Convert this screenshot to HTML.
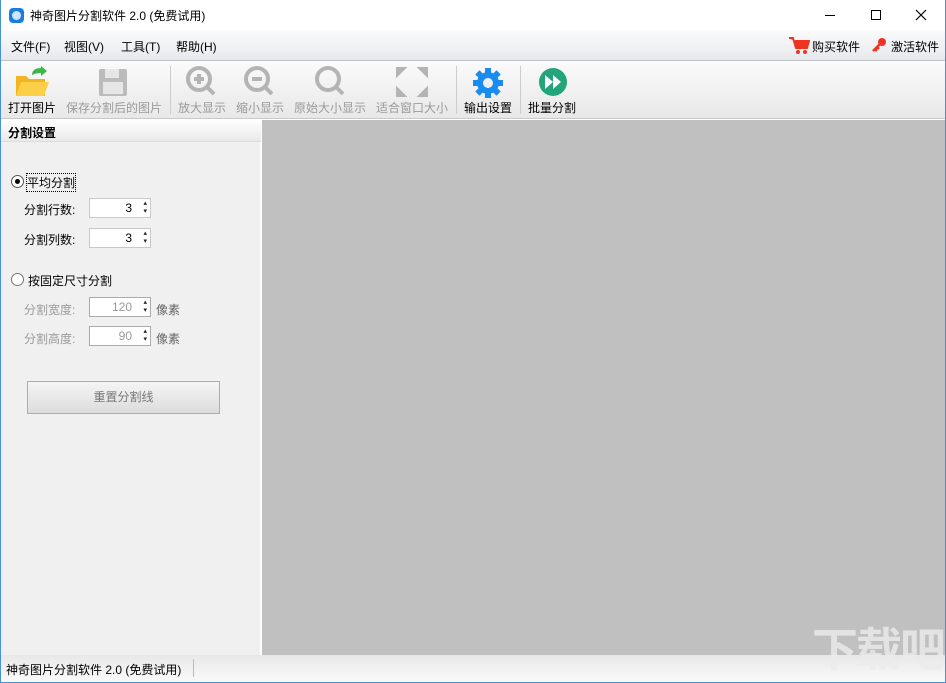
<!DOCTYPE html><html><head><meta charset="utf-8"><style>
*{margin:0;padding:0;box-sizing:border-box}
body{width:946px;height:683px;position:relative;overflow:hidden;background:#fff;font-family:"Liberation Sans","Noto Sans CJK SC",sans-serif;font-size:12px;color:#000}
.a{position:absolute}
.tb{font-size:12px;text-align:center}
.dis{color:#9a9a9a}
.sep{position:absolute;top:66px;width:1px;height:48px;background:#ccc}
.spin{position:absolute;width:62px;height:20px;background:#fff;border:1px solid #c8c8c8;text-align:right;padding-right:18px;line-height:18px}
.spin:after{content:"▴\A▾";white-space:pre;position:absolute;right:3px;top:1px;font-size:7px;line-height:8px;color:#222}
</style></head><body>
<div class="a" style="left:0;top:0;width:946px;height:683px;border:1px solid #4a90d9;border-top:none"></div>
<div class="a" style="left:9px;top:8px;width:15px;height:15px;border-radius:4px;background:#1a7de0"><div class="a" style="left:3px;top:3px;width:9px;height:9px;border-radius:50%;background:#cde6ff"></div></div>
<div class="a" style="left:30px;top:7px;font-size:12px">神奇图片分割软件 2.0 (免费试用)</div>
<div class="a" style="left:825px;top:15px;width:10px;height:1px;background:#000"></div>
<div class="a" style="left:871px;top:10px;width:10px;height:10px;border:1px solid #000"></div>
<svg class="a" style="left:915px;top:9px" width="12" height="12"><path d="M1 1l10 10M11 1L1 11" stroke="#000" stroke-width="1.2"/></svg>
<div class="a" style="left:1px;top:30px;width:944px;height:31px;background:linear-gradient(#fbfbfb,#e6e9ec);border-bottom:1px solid #bfc3c7"></div>
<div class="a" style="left:11px;top:38px">文件(F)</div>
<div class="a" style="left:64px;top:38px">视图(V)</div>
<div class="a" style="left:121px;top:38px">工具(T)</div>
<div class="a" style="left:176px;top:38px">帮助(H)</div>
<svg class="a" style="left:788px;top:36px" width="22" height="20"><path d="M1 2h4l3 10h11l2-7H7" fill="#e32" stroke="#e32" stroke-width="2"/><circle cx="10" cy="16" r="2" fill="#e32"/><circle cx="17" cy="16" r="2" fill="#e32"/></svg>
<div class="a" style="left:812px;top:38px">购买软件</div>
<svg class="a" style="left:871px;top:37px" width="16" height="16"><circle cx="11" cy="5" r="4" fill="#e32"/><path d="M9 7L2 14M4 12l2 2M6 10l2 2" stroke="#e32" stroke-width="2.5"/></svg>
<div class="a" style="left:891px;top:38px">激活软件</div>
<div class="a" style="left:1px;top:62px;width:944px;height:57px;background:linear-gradient(#fafafa,#e8e8e8);border-bottom:1px solid #c8c8c8"></div>
<svg class="a" style="left:14px;top:66px" width="36" height="32"><path d="M2 10h10l3 3h16v17H2z" fill="#f2b420"/><path d="M2 30l5-14h28l-5 14z" fill="#fbd048"/><path d="M18 9c0-5 4-7 9-7V0l6 5-6 5V7c-4 0-7 1-9 2z" fill="#3cb54a"/></svg>
<div class="a tb" style="left:8px;top:99px">打开图片</div>
<svg class="a" style="left:98px;top:68px" width="30" height="28"><rect x="1" y="1" width="28" height="27" rx="2" fill="#bbb"/><rect x="7" y="1" width="14" height="9" fill="#e6e6e6"/><rect x="5" y="14" width="20" height="12" fill="#e6e6e6"/></svg>
<div class="a tb dis" style="left:66px;top:99px">保存分割后的图片</div>
<div class="sep" style="left:170px"></div>
<svg class="a" style="left:185px;top:66px" width="32" height="32"><circle cx="14" cy="13" r="11" fill="none" stroke="#b4b4b4" stroke-width="4"/><path d="M22 21l7 7M9 13h10M14 8v10" stroke="#b4b4b4" stroke-width="4"/></svg>
<div class="a tb dis" style="left:178px;top:99px">放大显示</div>
<svg class="a" style="left:243px;top:66px" width="32" height="32"><circle cx="14" cy="13" r="11" fill="none" stroke="#b4b4b4" stroke-width="4"/><path d="M22 21l7 7M9 13h10" stroke="#b4b4b4" stroke-width="4"/></svg>
<div class="a tb dis" style="left:236px;top:99px">缩小显示</div>
<svg class="a" style="left:314px;top:66px" width="32" height="32"><circle cx="14" cy="13" r="11" fill="none" stroke="#b4b4b4" stroke-width="4"/><path d="M22 21l7 7" stroke="#b4b4b4" stroke-width="4"/></svg>
<div class="a tb dis" style="left:294px;top:99px">原始大小显示</div>
<svg class="a" style="left:395px;top:66px" width="34" height="32"><path d="M2 2h8L2 10zM32 2h-8l8 8zM2 30h8l-8-8zM32 30h-8l8-8z" fill="#b4b4b4" stroke="#b4b4b4" stroke-width="2"/></svg>
<div class="a tb dis" style="left:376px;top:99px">适合窗口大小</div>
<div class="sep" style="left:456px"></div>
<svg class="a" style="left:471px;top:66px" width="34" height="34" viewBox="0 0 34 34"><g fill="#1a8cf0"><circle cx="17" cy="17" r="11"/><g stroke="#1a8cf0" stroke-width="6"><path d="M17 2v30M2 17h30M6.4 6.4l21.2 21.2M27.6 6.4L6.4 27.6"/></g></g><circle cx="17" cy="17" r="5" fill="#f0f0f0"/></svg>
<div class="a tb" style="left:464px;top:99px">输出设置</div>
<div class="sep" style="left:520px"></div>
<svg class="a" style="left:538px;top:67px" width="30" height="30"><circle cx="15" cy="15" r="14" fill="#23a47a"/><path d="M7 8l8 7-8 7zM15 8l8 7-8 7z" fill="#fff"/></svg>
<div class="a tb" style="left:528px;top:99px">批量分割</div>
<div class="a" style="left:1px;top:120px;width:260px;height:535px;background:#f0f0f0;border-right:1px solid #fff"></div>
<div class="a" style="left:1px;top:120px;width:260px;height:22px;background:linear-gradient(#fff,#eaeaea);border-bottom:1px solid #ddd"></div>
<div class="a" style="left:8px;top:124px;font-weight:bold">分割设置</div>
<div class="a" style="left:11px;top:175px;width:13px;height:13px;border-radius:50%;border:1px solid #555;background:#fff"><div class="a" style="left:3px;top:3px;width:5px;height:5px;border-radius:50%;background:#000"></div></div>
<div class="a" style="left:27px;top:174px;outline:1px dotted #000">平均分割</div>
<div class="a" style="left:24px;top:201px">分割行数:</div>
<div class="spin" style="left:89px;top:198px">3</div>
<div class="a" style="left:24px;top:231px">分割列数:</div>
<div class="spin" style="left:89px;top:228px">3</div>
<div class="a" style="left:11px;top:273px;width:13px;height:13px;border-radius:50%;border:1px solid #777;background:#fff"></div>
<div class="a" style="left:28px;top:272px">按固定尺寸分割</div>
<div class="a dis" style="left:24px;top:301px">分割宽度:</div>
<div class="spin dis" style="left:89px;top:297px;border-color:#aaa">120</div>
<div class="a dis" style="left:156px;top:301px;color:#666">像素</div>
<div class="a dis" style="left:24px;top:330px">分割高度:</div>
<div class="spin dis" style="left:89px;top:326px;border-color:#aaa">90</div>
<div class="a dis" style="left:156px;top:330px;color:#666">像素</div>
<div class="a" style="left:27px;top:381px;width:193px;height:33px;border:1px solid #adadad;background:linear-gradient(#f5f5f5,#dcdcdc);text-align:center;line-height:31px;color:#777">重置分割线</div>
<div class="a" style="left:262px;top:120px;width:683px;height:535px;background:#c0c0c0"></div>
<div class="a" style="left:1px;top:655px;width:944px;height:27px;background:linear-gradient(#e8e8e8,#fafafa)"></div>
<div class="a" style="left:6px;top:661px">神奇图片分割软件 2.0 (免费试用)</div>
<div class="a" style="left:193px;top:659px;width:1px;height:18px;background:#bbb"></div>
<div class="a" style="left:812px;top:622px;font-size:46px;line-height:56px;color:rgba(235,235,235,0.8);font-weight:bold;letter-spacing:-2px">下载吧</div>
</body></html>
